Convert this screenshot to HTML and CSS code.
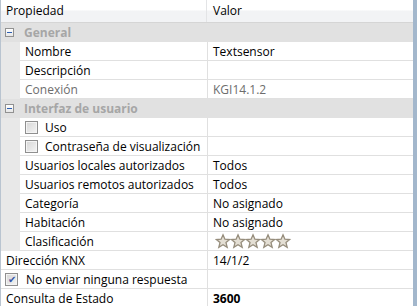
FILE: index.html
```html
<!DOCTYPE html>
<html lang="es">
<head>
  <meta charset="UTF-8" />
  <title>Propiedades</title>
  <link rel="stylesheet" href="styles.css">
</head>
<body>
  <div class="pane">
    <div class="header">
      <div class="name">Propiedad</div>
      <div class="value">Valor</div>
    </div>

    <div class="group">
      <span class="toggle"><span class="minus"></span></span>
      <span class="groupTitle">General</span>
    </div>
    <div class="row child">
      <div class="indent"></div>
      <div class="name">Nombre</div>
      <div class="value">Textsensor</div>
    </div>
    <div class="row child">
      <div class="indent"></div>
      <div class="name">Descripción</div>
      <div class="value"></div>
    </div>
    <div class="row child readonly">
      <div class="indent"></div>
      <div class="name">Conexión</div>
      <div class="value">KGI14.1.2</div>
    </div>

    <div class="group">
      <span class="toggle"><span class="minus"></span></span>
      <span class="groupTitle">Interfaz de usuario</span>
    </div>
    <div class="row child">
      <div class="indent"></div>
      <div class="name"><span class="check"></span>Uso</div>
      <div class="value"></div>
    </div>
    <div class="row child">
      <div class="indent"></div>
      <div class="name"><span class="check"></span>Contraseña de visualización</div>
      <div class="value"></div>
    </div>
    <div class="row child">
      <div class="indent"></div>
      <div class="name">Usuarios locales autorizados</div>
      <div class="value">Todos</div>
    </div>
    <div class="row child">
      <div class="indent"></div>
      <div class="name">Usuarios remotos autorizados</div>
      <div class="value">Todos</div>
    </div>
    <div class="row child">
      <div class="indent"></div>
      <div class="name">Categoría</div>
      <div class="value">No asignado</div>
    </div>
    <div class="row child">
      <div class="indent"></div>
      <div class="name">Habitación</div>
      <div class="value">No asignado</div>
    </div>
    <div class="row child">
      <div class="indent"></div>
      <div class="name">Clasificación</div>
      <div class="value">
        <svg class="stars" width="80" height="16" viewBox="0 0 80 16">
          <defs>
            <polygon id="star" points="7,0.8 8.9,5.2 13.6,5.5 10,8.6 11.2,13.3 7,10.8 2.8,13.3 4,8.6 0.4,5.5 5.1,5.2" />
          </defs>
          <use href="#star" x="1" y="1" />
          <use href="#star" x="16" y="1" />
          <use href="#star" x="31" y="1" />
          <use href="#star" x="46" y="1" />
          <use href="#star" x="61" y="1" />
        </svg>
      </div>
    </div>

    <div class="row">
      <div class="name">Dirección KNX</div>
      <div class="value">14/1/2</div>
    </div>
    <div class="row">
      <div class="name"><span class="check checked">&#10004;</span>No enviar ninguna respuesta</div>
      <div class="value"></div>
    </div>
    <div class="row">
      <div class="name">Consulta de Estado</div>
      <div class="value bold">3600</div>
    </div>
  </div>
</body>
</html>
```

FILE: styles.css
```css
body {
  margin: 0;
  background-color: #ffffff;
  font-family: "Open Sans", "Noto Sans", sans-serif;
  font-size: 12px;
  color: #000000;
}

.pane {
  width: 412px;
  height: 306px;
  overflow: hidden;
  border-left: 1px solid #b9c4d0;
  border-right: 4px solid #a3b7cc;
}

.header {
  display: flex;
  height: 22px;
  line-height: 22px;
  border-bottom: 1px solid #d5d5d5;
  background: linear-gradient(#ffffff 0%, #ffffff 45%, #f2f3f5 50%, #f2f3f5 100%);
}

.header .name {
  width: 200px;
  padding-left: 5px;
  border-right: 1px solid #e3e4e6;
}

.header .value {
  flex: 1;
  padding-left: 6px;
}

.row {
  display: flex;
  height: 19px;
}

.row .name {
  display: flex;
  align-items: center;
  width: 201px;
  padding-left: 5px;
  border-right: 1px solid #e0e0e0;
  border-bottom: 1px solid #e0e0e0;
  white-space: nowrap;
}

.row .value {
  display: flex;
  align-items: center;
  flex: 1;
  padding-left: 5px;
  border-bottom: 1px solid #e0e0e0;
  white-space: nowrap;
}

.child .indent {
  width: 19px;
  background-color: #e8e8e8;
}

.child .name {
  width: 182px;
}

.readonly .name,
.readonly .value {
  color: #6d6d6d;
}

.bold {
  font-weight: bold;
}

.group {
  display: flex;
  align-items: center;
  height: 19px;
  background-color: #e1e1e1;
}

.toggle {
  display: flex;
  align-items: center;
  justify-content: center;
  width: 7px;
  height: 7px;
  margin-left: 4px;
  margin-right: 10px;
  border: 1px solid #919191;
  background: linear-gradient(#ffffff, #e6e6e6);
}

.minus {
  width: 5px;
  height: 1px;
  background-color: #2d5fb2;
}

.groupTitle {
  font-weight: bold;
  color: #a6a6a6;
}

.check {
  display: inline-flex;
  align-items: center;
  justify-content: center;
  box-sizing: border-box;
  width: 13px;
  height: 13px;
  margin-right: 7px;
  border: 1px solid #8f8f8f;
  background: linear-gradient(135deg, #d6d6d6, #f4f4f4);
  box-shadow: inset 0 0 0 1px #f4f4f4;
  font-size: 10px;
  line-height: 1;
  color: #3657a8;
}

.row:not(.child) .check {
  margin-left: -1px;
  margin-right: 8px;
}

.stars {
  margin-left: 2px;
}

.stars use {
  fill: #e4dfd4;
  stroke: #968d7c;
  stroke-width: 1.3;
}
```
